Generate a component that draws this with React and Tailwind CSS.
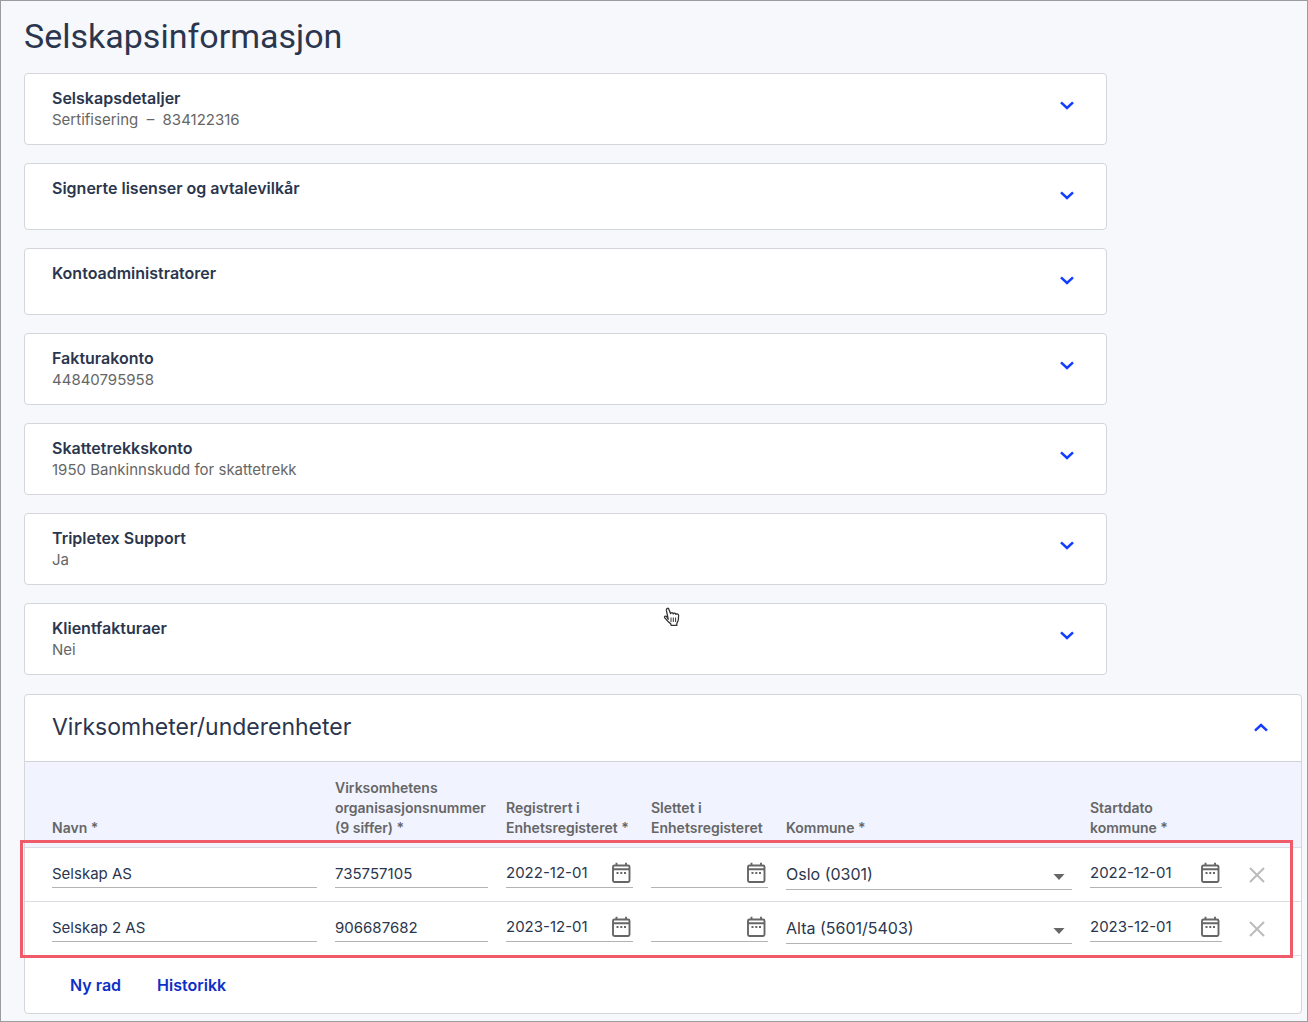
import { useState } from "react";

const cards = [
    { title: "Selskapsdetaljer", subtitle: "Sertifisering \u00a0–\u00a0 834122316" },
    { title: "Signerte lisenser og avtalevilkår" },
    { title: "Kontoadministratorer" },
    { title: "Fakturakonto", subtitle: "44840795958" },
    { title: "Skattetrekkskonto", subtitle: "1950 Bankinnskudd for skattetrekk" },
    { title: "Tripletex Support", subtitle: "Ja" },
    { title: "Klientfakturaer", subtitle: "Nei", hovered: true },
];

const kommuner = ["Oslo (0301)", "Alta (5601/5403)"];

const initialRows = [
    {
        id: 1,
        name: "Selskap AS",
        orgNumber: "735757105",
        registered: "2022-12-01",
        deleted: "",
        kommune: "Oslo (0301)",
        startDate: "2022-12-01",
    },
    {
        id: 2,
        name: "Selskap 2 AS",
        orgNumber: "906687682",
        registered: "2023-12-01",
        deleted: "",
        kommune: "Alta (5601/5403)",
        startDate: "2023-12-01",
    },
];

const Chevron = ({ up }) => (
    <svg
        viewBox="0 0 14 9"
        className={up ? "w-3.5 h-[9px] rotate-180" : "w-3.5 h-[9px]"}
        fill="none"
        stroke="#133dff"
        strokeWidth="2.5"
    >
        <path d="M1 1.3 7 7l6-5.7" />
    </svg>
);

const CalendarIcon = () => (
    <svg viewBox="0 -1 24 24" className="w-6 h-6" fill="none" stroke="#666" strokeWidth="1.9">
        <rect x="4" y="4.5" width="16.5" height="16.5" rx="1.4" />
        <path d="M4 8.2h16.5M7.5 1.8v3M17 1.8v3" />
        <path d="M7.5 12h2M11.3 12h2M15 12h2" />
    </svg>
);

const HandCursor = () => (
    <svg
        viewBox="0 0 18 20"
        className="absolute left-[638px] top-[3px] w-[18px] h-5"
        fill="#fff"
        stroke="#333"
        strokeWidth="1.3"
        strokeLinejoin="round"
    >
        <path d="M5.2 12.2 3.4 3.4C3 1 5.4.6 6 2.5l1.6 4.2c.3-1.4 2.4-1.3 2.6.2.5-1.2 2.4-.9 2.6.5.6-1 2.6-.7 2.8 1 .3 3-.3 5.6-1.8 8.2v1.8H8.3l-.7-1.8C5.6 15.3 3.6 13.1 1.8 10.9c-1-1.4.7-2.5 1.9-1.3z" />
        <path d="M8 10.5V15M10.3 10.5V15M12.6 10.5V15" strokeWidth="1" />
    </svg>
);

const InfoCard = ({ title, subtitle, hovered }) => (
    <section className="relative min-h-[67px] rounded border border-[#d4d6db] bg-white">
        <button className="flex w-full items-start justify-between pl-[27px] pr-8 py-[13px] text-left cursor-pointer">
            <span className="flex flex-col">
                <span className="font-semibold text-base leading-[22px] text-[#2b364e]">{title}</span>
                {subtitle && <span className="text-[15px] leading-[22px] text-[#666]">{subtitle}</span>}
            </span>
            <span className="flex h-9 items-center">
                <Chevron />
            </span>
        </button>
        {hovered && <HandCursor />}
    </section>
);

const TextField = ({ label, value, onChange }) => (
    <input
        type="text"
        aria-label={label}
        value={value}
        onChange={(e) => onChange(e.target.value)}
        className="block w-full h-7 border-b border-[#b3b3b3] bg-transparent text-[15px] outline-none"
    />
);

const DateField = ({ label, value, onChange }) => (
    <div className="flex h-7 border-b border-[#b3b3b3]">
        <input
            type="text"
            aria-label={label}
            value={value}
            onChange={(e) => onChange(e.target.value)}
            className="min-w-0 flex-1 bg-transparent text-[15px] outline-none"
        />
        <button aria-label={`Velg dato, ${label}`} className="h-6 cursor-pointer">
            <CalendarIcon />
        </button>
    </div>
);

const KommuneSelect = ({ value, onChange }) => (
    <div className="relative">
        <select
            aria-label="Kommune"
            value={value}
            onChange={(e) => onChange(e.target.value)}
            className="block w-full h-[30px] appearance-none border-b border-[#b3b3b3] bg-transparent pb-0.5 text-base outline-none"
        >
            {kommuner.map((kommune) => (
                <option key={kommune}>{kommune}</option>
            ))}
        </select>
        <svg viewBox="0 0 12 6" className="absolute right-[7px] bottom-2.5 w-3 h-1.5 pointer-events-none" fill="#666">
            <path d="M.5 0h11L6 6z" />
        </svg>
    </div>
);

const SubUnits = () => {
    const [rows, setRows] = useState(initialRows);

    const updateRow = (id, field, value) => {
        setRows((prev) => prev.map((row) => (row.id === id ? { ...row, [field]: value } : row)));
    };

    const removeRow = (id) => {
        setRows((prev) => prev.filter((row) => row.id !== id));
    };

    const addRow = () => {
        setRows((prev) => [
            ...prev,
            { id: Date.now(), name: "", orgNumber: "", registered: "", deleted: "", kommune: kommuner[0], startDate: "" },
        ]);
    };

    return (
        <section className="mt-[19px] rounded border border-[#d4d6db] bg-white">
            <button className="flex w-full h-[67px] items-center justify-between border-b border-[#d0d3da] pl-[27px] pr-[33px] pb-0.5 cursor-pointer">
                <span className="text-[23px] text-[#2b364e]">Virksomheter/underenheter</span>
                <Chevron up />
            </button>
            <div className="relative">
                <table className="w-full table-fixed border-separate border-spacing-0">
                    <colgroup>
                        <col className="w-[301px]" />
                        <col className="w-[171px]" />
                        <col className="w-[145px]" />
                        <col className="w-[135px]" />
                        <col />
                        <col className="w-[150px]" />
                        <col className="w-[70px]" />
                    </colgroup>
                    <thead className="bg-[#f1f3ff] text-left align-bottom text-sm leading-5 text-[#666]">
                        <tr>
                            <th className="pl-[27px] pr-[9px] pt-4 pb-[9px] font-semibold">Navn *</th>
                            <th className="px-[9px] pt-4 pb-[9px] font-semibold">
                                Virksomhetens
                                <br />
                                organisasjonsnummer
                                <br />
                                (9 siffer) *
                            </th>
                            <th className="px-[9px] pt-4 pb-[9px] font-semibold">
                                Registrert i
                                <br />
                                Enhetsregisteret *
                            </th>
                            <th className="px-[9px] pt-4 pb-[9px] font-semibold">
                                Slettet i
                                <br />
                                Enhetsregisteret
                            </th>
                            <th className="px-[9px] pt-4 pb-[9px] font-semibold">Kommune *</th>
                            <th className="px-[9px] pt-4 pb-[9px] font-semibold">
                                Startdato
                                <br />
                                kommune *
                            </th>
                            <th></th>
                        </tr>
                    </thead>
                    <tbody className="align-top text-[#2b364e]">
                        {rows.map((row) => (
                            <tr key={row.id} className="h-[54px]">
                                <td className="border-t border-[#dcdee3] pl-[27px] pr-[9px] pt-3">
                                    <TextField label="Navn" value={row.name} onChange={(v) => updateRow(row.id, "name", v)} />
                                </td>
                                <td className="border-t border-[#dcdee3] px-[9px] pt-3">
                                    <TextField
                                        label="Virksomhetens organisasjonsnummer"
                                        value={row.orgNumber}
                                        onChange={(v) => updateRow(row.id, "orgNumber", v)}
                                    />
                                </td>
                                <td className="border-t border-[#dcdee3] px-[9px] pt-3">
                                    <DateField
                                        label="Registrert i Enhetsregisteret"
                                        value={row.registered}
                                        onChange={(v) => updateRow(row.id, "registered", v)}
                                    />
                                </td>
                                <td className="border-t border-[#dcdee3] px-[9px] pt-3">
                                    <DateField
                                        label="Slettet i Enhetsregisteret"
                                        value={row.deleted}
                                        onChange={(v) => updateRow(row.id, "deleted", v)}
                                    />
                                </td>
                                <td className="border-t border-[#dcdee3] px-[9px] pt-3">
                                    <KommuneSelect value={row.kommune} onChange={(v) => updateRow(row.id, "kommune", v)} />
                                </td>
                                <td className="border-t border-[#dcdee3] px-[9px] pt-3">
                                    <DateField
                                        label="Startdato kommune"
                                        value={row.startDate}
                                        onChange={(v) => updateRow(row.id, "startDate", v)}
                                    />
                                </td>
                                <td className="border-t border-[#dcdee3] px-[9px] pt-3">
                                    <button
                                        aria-label="Slett rad"
                                        onClick={() => removeRow(row.id)}
                                        className="flex w-[34px] h-[30px] items-center justify-center cursor-pointer"
                                    >
                                        <svg viewBox="0 0 16 16" className="w-4 h-4" stroke="#bbb" strokeWidth="2">
                                            <path d="M1 1l14 14M15 1 1 15" />
                                        </svg>
                                    </button>
                                </td>
                            </tr>
                        ))}
                    </tbody>
                </table>
                {/* highlight around the two company rows */}
                <div className="absolute -left-[5px] right-2 -bottom-[3px] h-[118px] border-3 border-[#ef5b68] pointer-events-none"></div>
            </div>
            <div className="flex h-[58px] items-center border-t border-[#dcdee3] pl-[27px] font-semibold text-base text-[#0d2fc7]">
                <button onClick={addRow} className="px-[18px] cursor-pointer">
                    Ny rad
                </button>
                <button className="px-[18px] cursor-pointer">Historikk</button>
            </div>
        </section>
    );
};

const App = () => (
    <main className="min-h-screen border border-[#9b9ca0] bg-[#f7f8fc] pl-[23px] pr-[5px] pb-[7px] font-[Inter,sans-serif]">
        <h1 className="pt-3 pb-3.5 font-[Roboto,sans-serif] text-[34px] leading-[46px] text-[#2b364e]">Selskapsinformasjon</h1>
        <div className="flex max-w-[1083px] flex-col gap-[18px]">
            {cards.map((card) => (
                <InfoCard key={card.title} {...card} />
            ))}
        </div>
        <SubUnits />
    </main>
);

export default App;
